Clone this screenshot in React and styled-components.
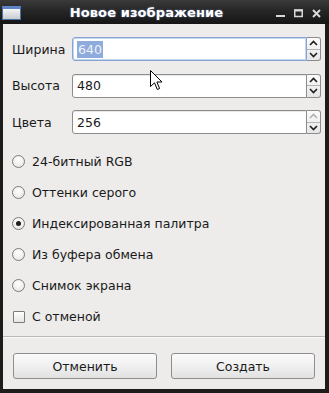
import React, { useState } from 'react'
import styled, { createGlobalStyle } from 'styled-components'

const GlobalStyle = createGlobalStyle`
  html, body {
    margin: 0;
    padding: 0;
    background: #1b1b1b;
  }
  * {
    box-sizing: border-box;
  }
`

const fields = [
  { label: 'Ширина', value: '640', focused: true },
  { label: 'Высота', value: '480' },
  { label: 'Цвета', value: '256', atMax: true },
]

const options = [
  '24-битный RGB',
  'Оттенки серого',
  'Индексированная палитра',
  'Из буфера обмена',
  'Снимок экрана',
]

const Window = styled.div`
  position: relative;
  width: 329px;
  height: 393px;
  display: flex;
  flex-direction: column;
  background: #1c1c1c;
  padding: 0 4px 4px 3px;
  font-family: 'DejaVu Sans', 'Liberation Sans', sans-serif;
  font-size: 12px;
  color: #1a1a1a;
`

const TitleBar = styled.div`
  height: 24px;
  margin: 0 -4px 0 -3px;
  display: flex;
  align-items: center;
  padding: 0 8px 0 2px;
  background: linear-gradient(#3a3a3a, #262626 45%, #151515);
`

const WinIcon = styled.div`
  width: 19px;
  height: 14px;
  margin-top: 2px;
  border: 1px solid #4a6ea8;
  border-top: 3px solid #5c86c8;
  background: linear-gradient(#f4f4f4, #c9ccd0);
`

const Title = styled.div`
  flex: 1;
  text-align: center;
  padding-right: 4px;
  color: #ffffff;
  font-weight: bold;
  font-size: 13px;
  letter-spacing: 0.1px;
  text-shadow: 0 0 2px rgba(160, 190, 255, 0.6);
`

const Controls = styled.div`
  display: flex;
  gap: 9px;
  align-items: center;
  margin-top: 2px;
`

const Panel = styled.div`
  flex: 1;
  display: flex;
  flex-direction: column;
  background: #edeceb;
  padding: 13px 4px 10px 9px;
`

const Fields = styled.div`
  display: grid;
  grid-template-columns: 60px 1fr;
  row-gap: 12.5px;
  align-items: center;
`

const Label = styled.div`
  font-size: 12.5px;
`

const Spin = styled.div`
  display: flex;
  height: 24px;
`

const Entry = styled.div`
  flex: 1;
  display: flex;
  align-items: center;
  padding-left: 4px;
  background: #fff;
  border: 1px solid ${p => (p.$focused ? '#86a4d4' : '#8c8c8c')};
  border-radius: 3px 0 0 3px;
  box-shadow: ${p => (p.$focused ? 'inset 0 0 0 1px #c5d5ee' : 'inset 0 1px 1px rgba(0,0,0,0.1)')};
  font-size: 12.5px;
`

const Selected = styled.span`
  background: #8eabdb;
  color: #eef2fa;
  padding: 1px 1px;
`

const Stepper = styled.div`
  width: 14px;
  display: flex;
  flex-direction: column;
  border: 1px solid #8c8c8c;
  border-left: none;
  border-radius: 0 3px 3px 0;
  background: linear-gradient(#fbfbfb, #e6e6e6);
`

const StepHalf = styled.div`
  flex: 1;
  display: flex;
  align-items: center;
  justify-content: center;
  & + & {
    border-top: 1px solid #b4b4b4;
  }
`

const Options = styled.div`
  display: flex;
  flex-direction: column;
  margin-top: 12px;
`

const OptionRow = styled.label`
  height: 31px;
  display: flex;
  align-items: center;
  gap: 7px;
  font-size: 12.5px;
`

const Radio = styled.span`
  width: 13px;
  height: 13px;
  border-radius: 50%;
  border: 1px solid #7b7b7b;
  background: radial-gradient(circle at 50% 35%, #ffffff, #e2e2e2);
  display: flex;
  align-items: center;
  justify-content: center;
  &::after {
    content: '';
    width: 5px;
    height: 5px;
    border-radius: 50%;
    background: ${p => (p.$checked ? '#1e1e1e' : 'transparent')};
  }
`

const Check = styled.span`
  width: 12px;
  height: 12px;
  margin-left: 1px;
  border: 1px solid #7b7b7b;
  border-radius: 1px;
  background: linear-gradient(#ffffff, #e6e6e6);
`

const Separator = styled.div`
  height: 2px;
  margin: 4px -4px 0 -9px;
  border-top: 1px solid #b9b9b9;
  border-bottom: 1px solid #fafafa;
`

const Buttons = styled.div`
  display: flex;
  gap: 14px;
  margin-top: 15px;
  padding-left: 1px;
`

const Button = styled.button`
  width: 144px;
  height: 26px;
  border: 1px solid #8e8e8e;
  border-radius: 3px;
  background: linear-gradient(#fbfbfb, #f0f0f0 50%, #e1e1e1);
  font-family: 'DejaVu Sans', 'Liberation Sans', sans-serif;
  font-size: 12.5px;
  color: #1a1a1a;
  padding: 0;
`

const Cursor = styled.svg`
  position: absolute;
  left: 150px;
  top: 70px;
`

const Chevron = ({ up, dim }) => (
  <svg width="9" height="6" viewBox="0 0 9 6">
    <path
      d={up ? 'M1 5 L4.5 1.5 L8 5' : 'M1 1 L4.5 4.5 L8 1'}
      fill="none"
      stroke={dim ? '#b0b0b0' : '#1e1e1e'}
      strokeWidth="1.6"
    />
  </svg>
)

const App = () => {
  const [mode, setMode] = useState(2)

  return (
    <Window>
      <GlobalStyle />
      <TitleBar>
        <WinIcon />
        <Title>Новое изображение</Title>
        <Controls>
          <svg width="9" height="9" viewBox="0 0 9 9">
            <rect x="0" y="6" width="9" height="2" fill="#d8d8d8" />
          </svg>
          <svg width="9" height="9" viewBox="0 0 9 9">
            <rect x="0.75" y="1" width="7.5" height="6.5" fill="none" stroke="#d8d8d8" strokeWidth="1.5" />
            <rect x="0" y="0.5" width="9" height="2" fill="#d8d8d8" />
          </svg>
          <svg width="9" height="9" viewBox="0 0 9 9">
            <path d="M1 1 L8 8 M8 1 L1 8" stroke="#d8d8d8" strokeWidth="2" />
          </svg>
        </Controls>
      </TitleBar>
      <Panel>
        <Fields>
          {fields.map(f => (
            <React.Fragment key={f.label}>
              <Label>{f.label}</Label>
              <Spin>
                <Entry $focused={f.focused}>
                  {f.focused ? <Selected>{f.value}</Selected> : f.value}
                </Entry>
                <Stepper>
                  <StepHalf>
                    <Chevron up dim={f.atMax} />
                  </StepHalf>
                  <StepHalf>
                    <Chevron />
                  </StepHalf>
                </Stepper>
              </Spin>
            </React.Fragment>
          ))}
        </Fields>
        <Options>
          {options.map((o, i) => (
            <OptionRow key={o} onClick={() => setMode(i)}>
              <Radio $checked={mode === i} />
              {o}
            </OptionRow>
          ))}
          <OptionRow>
            <Check />
            С отменой
          </OptionRow>
        </Options>
        <Separator />
        <Buttons>
          <Button>Отменить</Button>
          <Button>Создать</Button>
        </Buttons>
      </Panel>
      <Cursor width="13" height="21" viewBox="0 0 13 21">
        <path
          d="M0.5 0.5 L0.5 16.5 L4.5 12.8 L7.3 19.5 L9.6 18.5 L6.9 12 L12 12 Z"
          fill="#ffffff"
          stroke="#000000"
          strokeWidth="1"
          strokeLinejoin="miter"
        />
      </Cursor>
    </Window>
  )
}

export default App
